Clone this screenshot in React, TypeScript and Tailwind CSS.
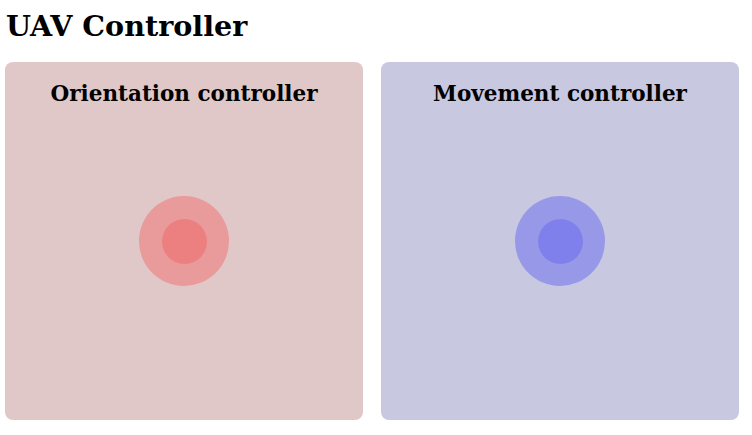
import React from "react";

function Pad({ title, bg, outer, inner }: { title: string; bg: string; outer: string; inner: string }) {
  return (
    <div className={`relative w-[358px] h-[358px] rounded-[8px] ${bg}`}>
      <h2 className="pt-[18px] text-center text-[21.5px] leading-[28px] font-bold text-black">{title}</h2>
      <div className="absolute inset-0 flex items-center justify-center">
        <div className={`w-[90px] h-[90px] rounded-full flex items-center justify-center ${outer}`}>
          <div className={`w-[45px] h-[45px] rounded-full ${inner}`} />
        </div>
      </div>
    </div>
  );
}

export default function App() {
  return (
    <div className="w-[752px] h-[435px] bg-white px-[5px]" style={{ fontFamily: '"DejaVu Serif", serif' }}>
      <h1 className="pt-[10px] mb-[20px] text-[28.6px] leading-[32px] font-bold text-black pl-[1px]">UAV Controller</h1>
      <div className="flex gap-[18px]">
        <Pad title="Orientation controller" bg="bg-[#e0c8c8]" outer="bg-[#e99a9a]" inner="bg-[#ec8080]" />
        <Pad title="Movement controller" bg="bg-[#c8c8e0]" outer="bg-[#9898e8]" inner="bg-[#8080ec]" />
      </div>
    </div>
  );
}
